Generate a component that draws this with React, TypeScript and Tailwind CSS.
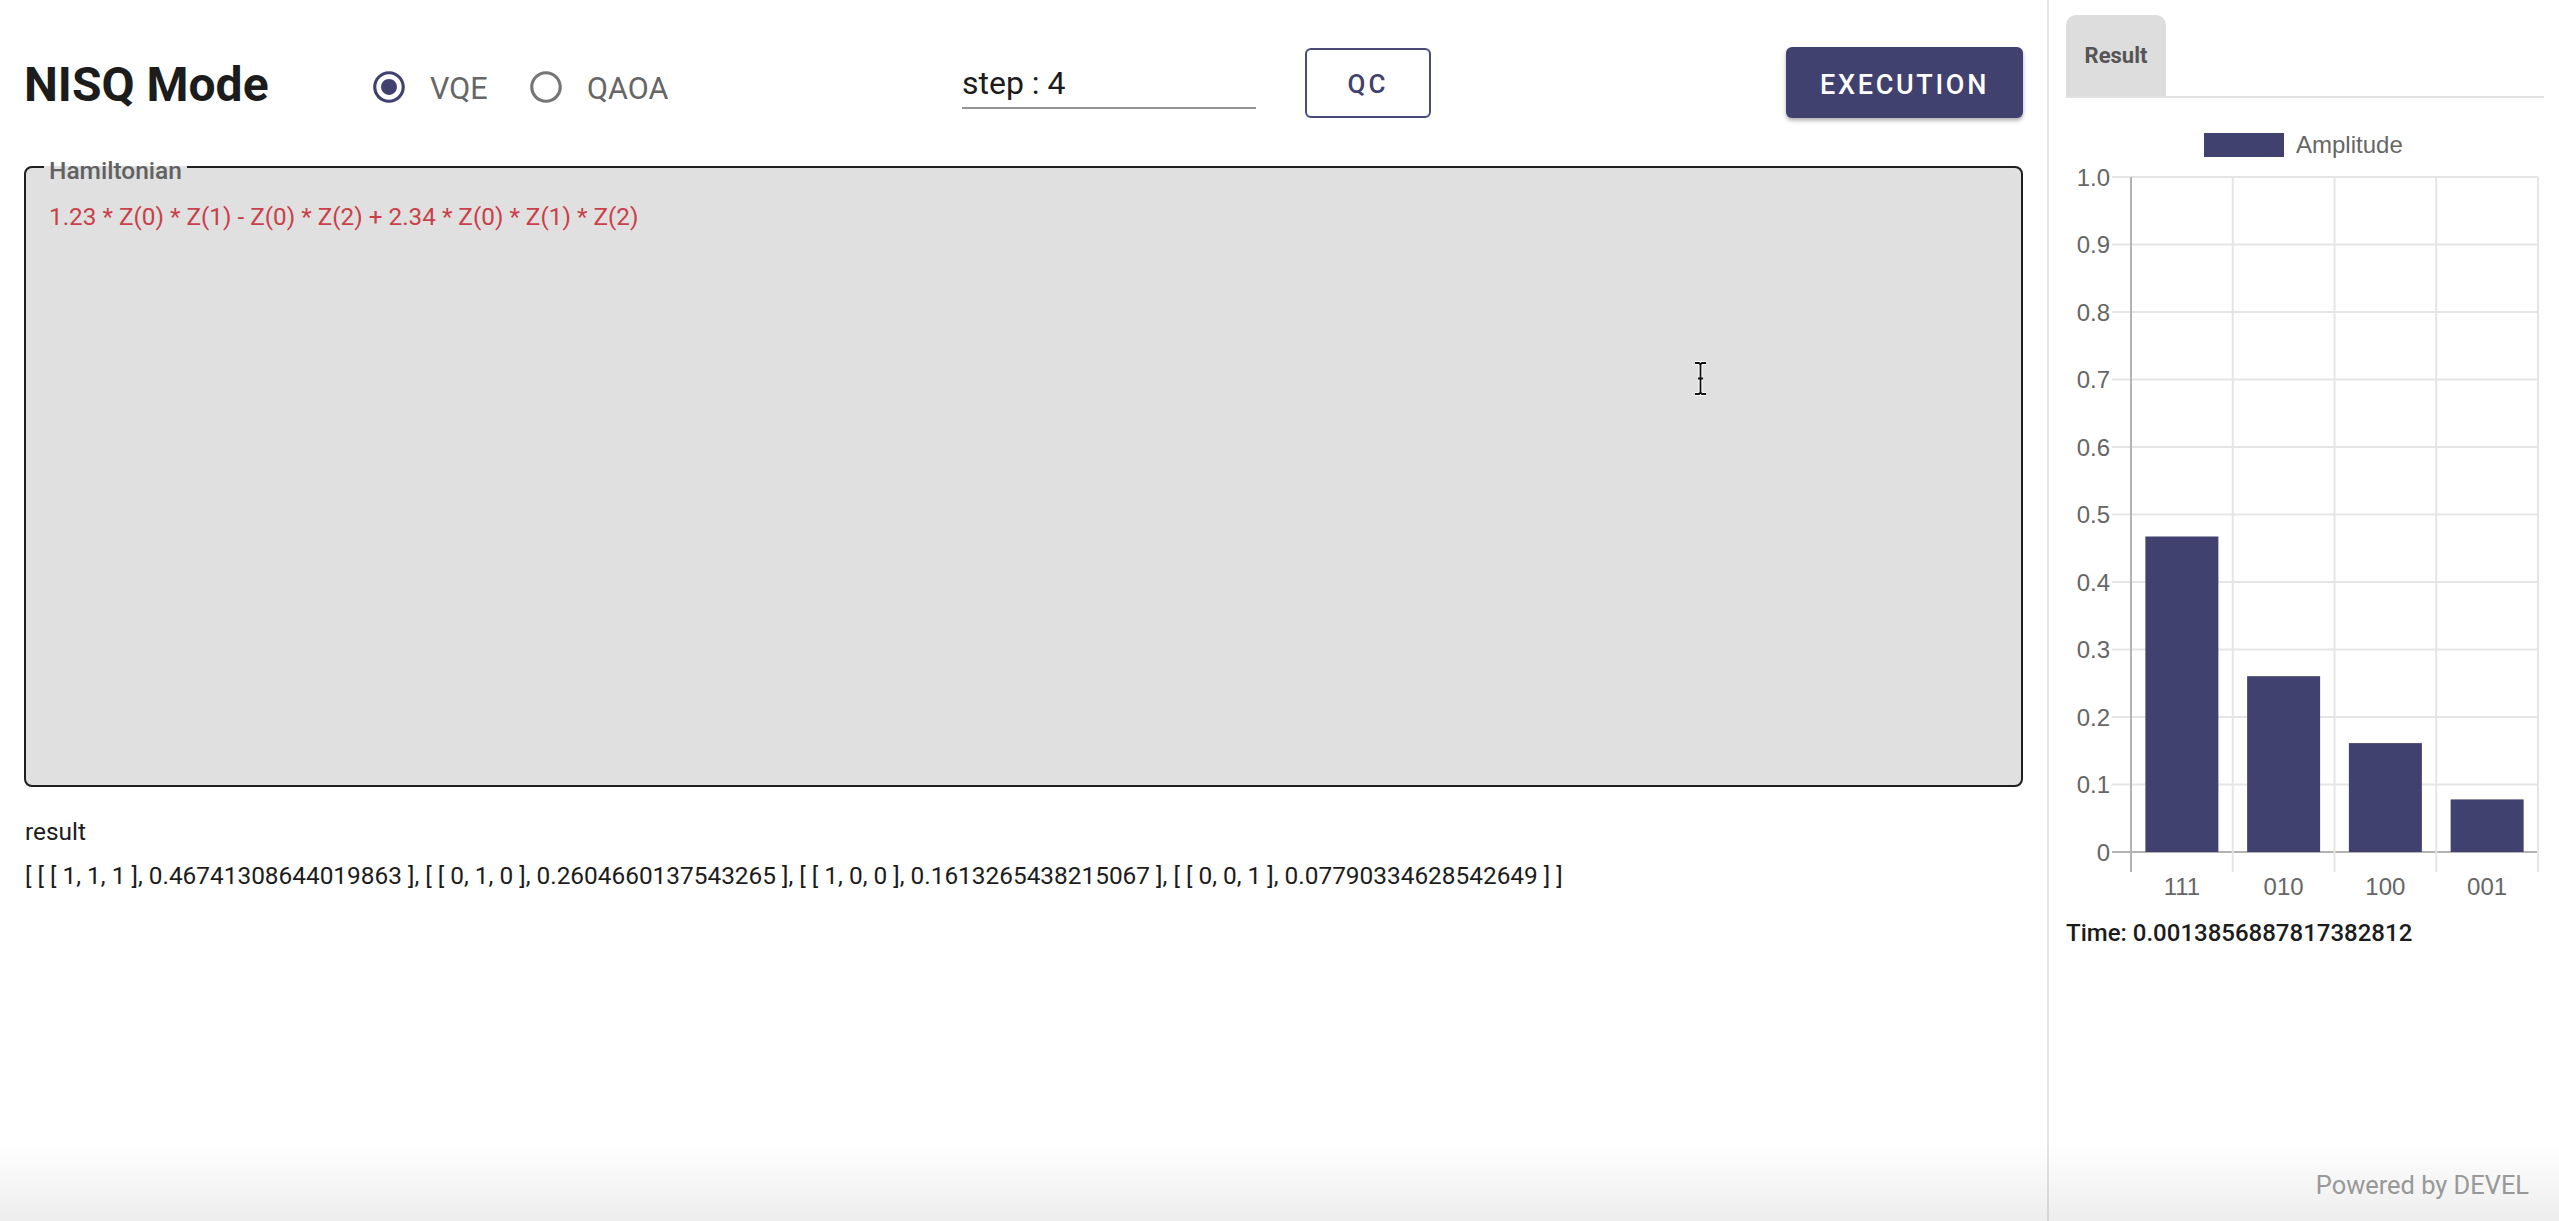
import React from "react";

const PRIMARY = "#41416f";

const results: [string, number][] = [
  ["111", 0.46741308644019863],
  ["010", 0.2604660137543265],
  ["100", 0.1613265438215067],
  ["001", 0.07790334628542649],
];

function RadioIcon({ checked }: { checked: boolean }) {
  return (
    <svg width="38" height="38" viewBox="0 0 24 24" fill={checked ? PRIMARY : "#757575"}>
      <path d="M12 2C6.48 2 2 6.48 2 12s4.48 10 10 10 10-4.48 10-10S17.52 2 12 2zm0 18c-4.42 0-8-3.58-8-8s3.58-8 8-8 8 3.58 8 8-3.58 8-8 8z" />
      {checked && <path d="M12 7c-2.76 0-5 2.24-5 5s2.24 5 5 5 5-2.24 5-5-2.24-5-5-5z" />}
    </svg>
  );
}

function Radio({ label, checked, width }: { label: string; checked: boolean; width: string }) {
  return (
    <div className={`${width} mt-[67px] flex items-center`}>
      <RadioIcon checked={checked} />
      <span className="ml-[22px] mt-[4px] text-[30.5px] leading-[36px] text-[#666666]">{label}</span>
    </div>
  );
}

function AmplitudeChart() {
  const axisX = 65;
  const zeroY = 754;
  const unit = 675;
  const cat = 101.75;
  const ticks = [0, 0.1, 0.2, 0.3, 0.4, 0.5, 0.6, 0.7, 0.8, 0.9, 1.0];
  const font = "Liberation Sans, Arial, Helvetica, sans-serif";
  return (
    <svg width="478" height="819" viewBox="0 0 478 819" fontFamily={font}>
      {/* legend */}
      <rect x="138" y="35" width="80" height="24" fill={PRIMARY} />
      <text x="230" y="55" fontSize="24" fill="#666666">
        Amplitude
      </text>

      {/* horizontal grid + y labels */}
      {ticks.map((t) => {
        const y = zeroY - t * unit;
        return (
          <g key={t}>
            <line
              x1="46"
              x2="472"
              y1={y}
              y2={y}
              stroke={t === 0 ? "#b3b3b3" : "#e5e5e5"}
              strokeWidth="2"
            />
            <text x="44" y={y} fontSize="24" fill="#666666" textAnchor="end" dominantBaseline="central">
              {t === 0 ? "0" : t.toFixed(1)}
            </text>
          </g>
        );
      })}

      {/* vertical grid */}
      {[0, 1, 2, 3, 4].map((i) => (
        <line
          key={i}
          x1={axisX + i * cat}
          x2={axisX + i * cat}
          y1="79"
          y2="774"
          stroke={i === 0 ? "#b3b3b3" : "#e5e5e5"}
          strokeWidth="2"
        />
      ))}

      {/* bars */}
      {results.map(([label, v], i) => {
        const x = axisX + i * cat + (cat - 73) / 2;
        const top = zeroY - v * unit;
        return (
          <g key={label}>
            <rect x={x} y={top} width="73" height={zeroY - top} fill={PRIMARY} />
            <text x={axisX + i * cat + cat / 2} y="797" fontSize="24" fill="#666666" textAnchor="middle">
              {label}
            </text>
          </g>
        );
      })}
    </svg>
  );
}

export default function App() {
  return (
    <div className="relative flex h-[1221px] w-full overflow-hidden bg-white font-['Roboto',sans-serif] text-[#212121]">
      {/* left panel */}
      <div className="relative w-[2047px] shrink-0">
        <div className="flex items-start px-[24px]">
          <div className="mt-[57px] w-[346px] text-[48px] font-bold leading-[56px] text-[#1c1c1c]">NISQ Mode</div>
          <Radio label="VQE" checked width="w-[157px]" />
          <Radio label="QAOA" checked={false} width="w-[435px]" />
          <div className="mt-[65px] w-[294px] border-b-2 border-[#949494] pb-[5px]">
            <div className="text-[32px] leading-[37px] text-[#1c1c1c]">step : 4</div>
          </div>
          <button className="ml-[49px] mt-[48px] flex h-[70px] w-[126px] items-center justify-center rounded-[6px] border-2 border-[#4a4a78] pt-[3px] text-[26px] font-medium tracking-[0.12em] text-[#41416f]">
            QC
          </button>
          <button className="ml-auto mt-[47px] flex h-[71px] w-[237px] items-center justify-center rounded-[6px] bg-[#41416f] pt-[5px] text-[27px] font-medium tracking-[0.1em] text-white shadow-[0_3px_5px_rgba(0,0,0,0.2),0_2px_3px_rgba(0,0,0,0.14)]">
            EXECUTION
          </button>
        </div>

        <fieldset className="mx-[24px] mt-[31px] h-[638px] rounded-[8px] border-2 border-[#1f1f1f] bg-[#e0e0e0]">
          <legend className="ml-[18px] px-[5px] pt-[8px] text-[24.5px] font-medium leading-[28px] text-[#616161]">
            Hamiltonian
          </legend>
          <div className="mt-[16px] pl-[23px] text-[24.3px] leading-[32px] text-[#c9404a]">
            1.23 * Z(0) * Z(1) - Z(0) * Z(2) + 2.34 * Z(0) * Z(1) * Z(2)
          </div>
        </fieldset>

        <div className="mt-[26px] px-[25px] text-[24.4px] leading-[37px] text-[#1c1c1c]">
          <div>result</div>
          <div className="mt-[7px]">
            [ [ [ 1, 1, 1 ], 0.46741308644019863 ], [ [ 0, 1, 0 ], 0.2604660137543265 ], [ [ 1, 0, 0 ],
            0.1613265438215067 ], [ [ 0, 0, 1 ], 0.07790334628542649 ] ]
          </div>
        </div>

        {/* mouse text cursor */}
        <svg className="absolute left-[1692px] top-[361px]" width="17" height="35" viewBox="0 0 17 35">
          <path
            d="M3 2h4l1.5 1.5L10 2h4M8.5 3.5v28M3 33h4l1.5-1.5L10 33h4M6 17.5h5"
            fill="none"
            stroke="#ffffff"
            strokeWidth="4"
            strokeLinejoin="round"
          />
          <path
            d="M3 2h4l1.5 1.5L10 2h4M8.5 3.5v28M3 33h4l1.5-1.5L10 33h4M6 17.5h5"
            fill="none"
            stroke="#111111"
            strokeWidth="1.8"
          />
        </svg>
      </div>

      {/* right panel */}
      <div className="flex min-w-0 flex-1 flex-col border-l-2 border-[#e4e4e4] pl-[17px] pr-[15px]">
        <div className="mt-[15px] flex border-b-2 border-[#e2e2e2]">
          <div className="flex h-[81px] w-[100px] items-center justify-center rounded-t-[10px] bg-[#dddddd] text-[22px] font-bold text-[#555555]">
            Result
          </div>
        </div>
        <AmplitudeChart />
        <div className="text-[24px] font-medium leading-[32px] text-[#1c1c1c]">Time: 0.0013856887817382812</div>
        <div className="mt-auto pb-[20px] pr-[15px] text-right text-[25.4px] leading-[32px] text-[#9e9e9e]">
          Powered by DEVEL
        </div>
      </div>

      {/* soft shadow along the bottom edge */}
      <div className="pointer-events-none absolute inset-x-0 bottom-0 h-[80px] bg-gradient-to-b from-transparent to-black/[0.07]" />
    </div>
  );
}
